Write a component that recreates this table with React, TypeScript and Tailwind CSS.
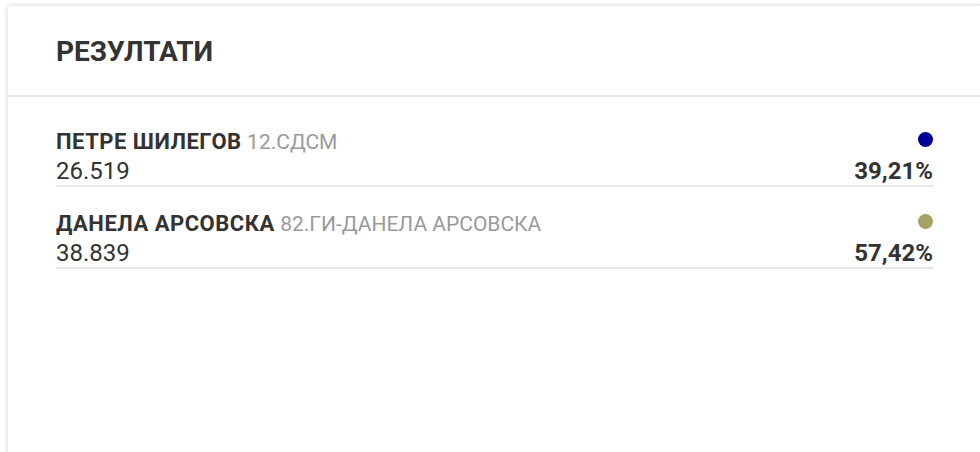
const results = [
  {
    name: "ПЕТРЕ ШИЛЕГОВ",
    party: "12.СДСМ",
    votes: "26.519",
    percent: "39,21%",
    color: "bg-[#000099]",
  },
  {
    name: "ДАНЕЛА АРСОВСКА",
    party: "82.ГИ-ДАНЕЛА АРСОВСКА",
    votes: "38.839",
    percent: "57,42%",
    color: "bg-[#a3a163]",
  },
];

export default function App() {
  return (
    <div className="h-[452px] overflow-hidden bg-white pl-2 pt-1.5 font-['Roboto',sans-serif] text-[#333]">
      <div className="h-[460px] w-[980px] rounded-sm bg-white shadow-[0_0_6px_rgba(0,0,0,0.18)]">
        <div className="flex h-[91px] items-center border-b-2 border-[#e6e6e6] px-12 pt-0.5">
          <h2 className="text-[28px] font-bold">РЕЗУЛТАТИ</h2>
        </div>

        <div className="w-[925px] pl-12 pt-[30px]">
          {results.map((r) => (
            <div key={r.name} className="mb-[22px] border-b-2 border-[#e6e6e6]">
              <div className="flex h-[30px] justify-between">
                <p className="text-[22px] leading-[30px]">
                  <span className="font-bold tracking-[0.5px]">{r.name}</span>{" "}
                  <span className="text-[21px] text-[#9a9a9a]">{r.party}</span>
                </p>
                <span className={`mt-[5px] h-[15px] w-[15px] rounded-full ${r.color}`} />
              </div>
              <div className="flex h-[28px] items-center justify-between text-2xl">
                <span>{r.votes}</span>
                <span className="font-bold">{r.percent}</span>
              </div>
            </div>
          ))}
        </div>
      </div>
    </div>
  );
}
